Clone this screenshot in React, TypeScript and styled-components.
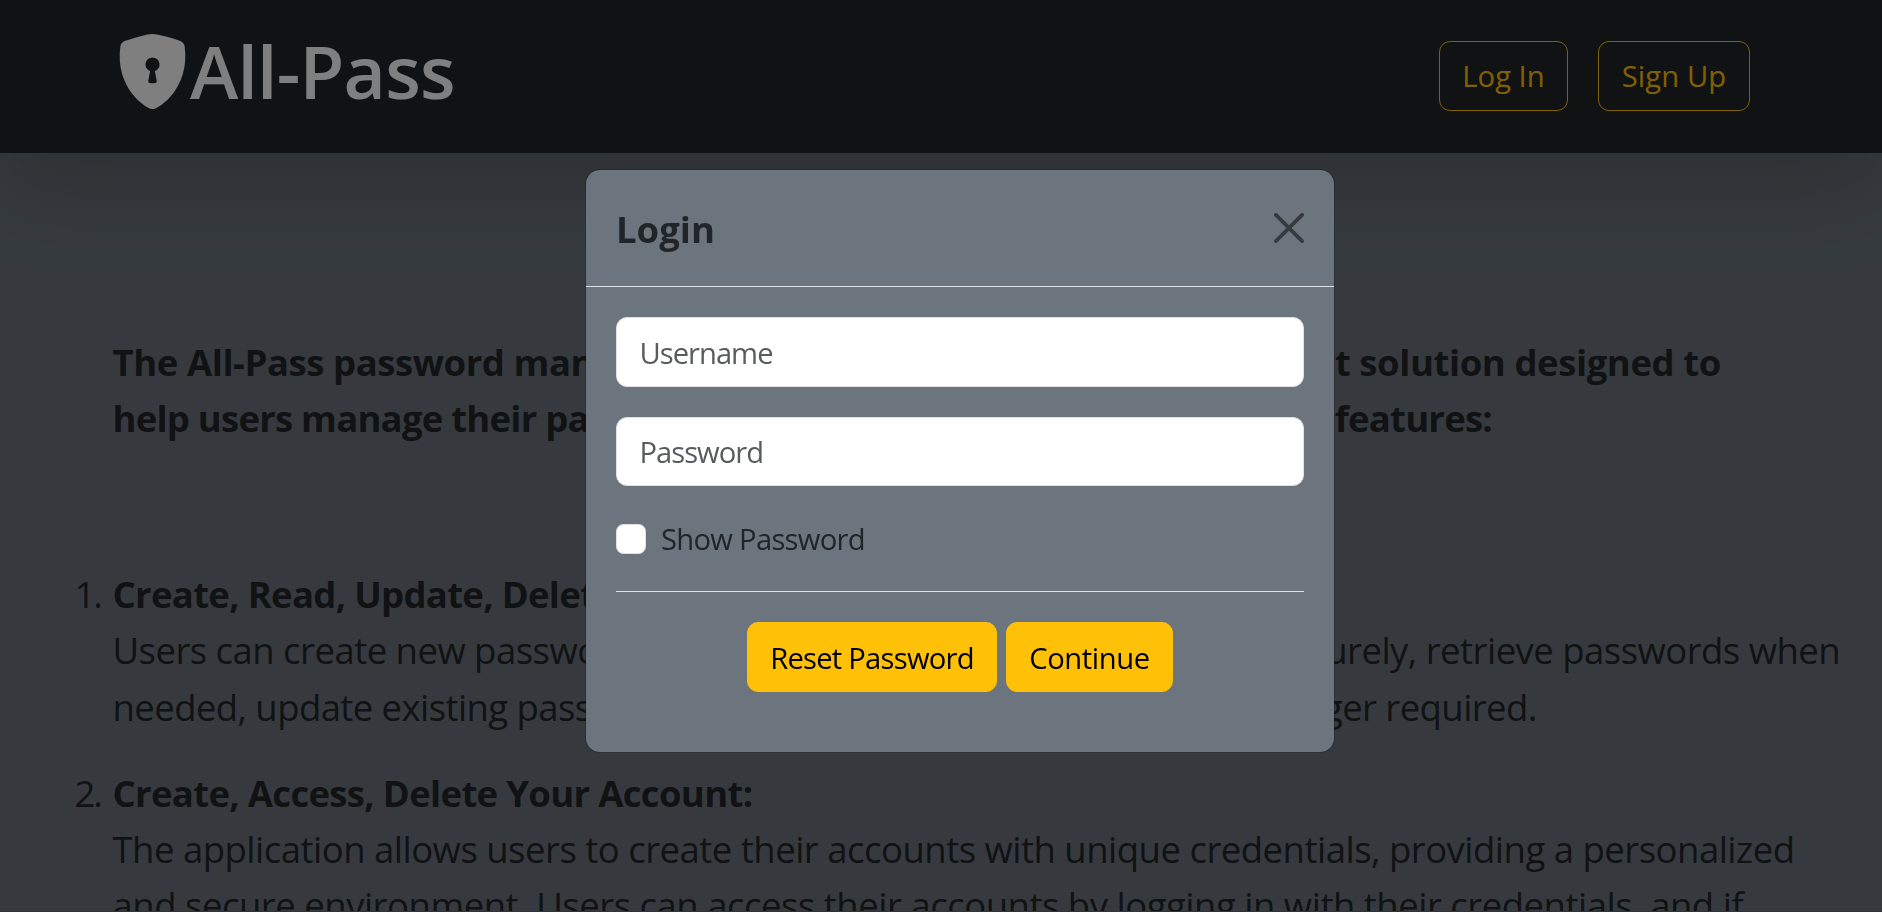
import React, { useState } from "react";
import styled, { createGlobalStyle } from "styled-components";
import { BsShieldLockFill } from "react-icons/bs";

const GlobalStyle = createGlobalStyle`
  *, *::before, *::after { box-sizing: border-box; }
  body {
    margin: 0;
    overflow: hidden;
    background: #6c757d;
    color: #212529;
    font-family: "Open Sans", "Noto Sans", sans-serif;
    font-size: 36.5px;
    line-height: 56.25px;
  }
`;

const Page = styled.div`
  height: 912px;
  overflow: hidden;
  background: #6c757d;
  border-bottom: 1px solid #785d6b;
`;

const Navbar = styled.nav`
  display: flex;
  align-items: center;
  justify-content: space-between;
  height: 153px;
  padding: 0 132px 0 115px;
  background: #212529;
  box-shadow: 0 30px 90px rgba(0, 0, 0, 0.175);
`;

const Brand = styled.a`
  display: flex;
  align-items: center;
  color: #fff;
  font-size: 73px;
  font-weight: 600;
  letter-spacing: -0.75px;
  line-height: 112px;
  margin-top: -11px;

  svg {
    flex: none;
  }
`;

const NavActions = styled.div`
  display: flex;
  gap: 30px;
  margin-bottom: 2px;
`;

const Button = styled.button<{ $width: number; $spacing?: number; $outline?: boolean }>`
  width: ${(p) => p.$width}px;
  height: 70px;
  padding: 2px 0 0;
  border: 1px solid #ffc107;
  border-radius: 11px;
  background: ${(p) => (p.$outline ? "transparent" : "#ffc107")};
  color: ${(p) => (p.$outline ? "#ffc107" : "#000")};
  font-family: inherit;
  font-size: 29.2px;
  line-height: 45px;
  letter-spacing: ${(p) => p.$spacing ?? 0}px;
  white-space: nowrap;
`;

const Content = styled.main`
  padding: 180.5px 0 0 112.5px;
`;

const Intro = styled.h5`
  margin: 0 0 120px;
  font-size: inherit;
  font-weight: 700;
`;

const Line = styled.span<{ $spacing: number }>`
  display: block;
  white-space: nowrap;
  letter-spacing: ${(p) => p.$spacing}px;
`;

const Features = styled.ol`
  margin: 0;
  padding: 0;
`;

const Feature = styled.li`
  display: flex;
  margin: 0 0 30px -38px;
`;

const Marker = styled.span`
  flex: none;
  width: 38px;
  letter-spacing: -2px;
`;

const FeatureTitle = styled(Line)`
  font-weight: 700;
`;

const Backdrop = styled.div`
  position: fixed;
  inset: 0;
  padding: 169px 0 0 585px;
  background: rgba(0, 0, 0, 0.5);
`;

const Modal = styled.div`
  width: 750px;
  height: 584px;
  border: 1px solid rgba(0, 0, 0, 0.175);
  border-radius: 15px;
  background: #6c757d;
  background-clip: padding-box;
`;

const ModalHeader = styled.header`
  display: flex;
  align-items: center;
  justify-content: space-between;
  height: 117px;
  padding: 0 30px;
  border-bottom: 1px solid #dee2e6;
`;

const ModalTitle = styled.h1`
  margin: 3px 0 0;
  font-size: 36.5px;
  font-weight: 700;
  letter-spacing: 0;
`;

const CloseButton = styled.button`
  display: flex;
  margin-bottom: 1px;
  padding: 0;
  border: 0;
  background: none;
  opacity: 0.5;
`;

const ModalBody = styled.form`
  display: flex;
  flex-direction: column;
  padding: 30px;
`;

const Field = styled.input<{ $spacing: number; $height: number }>`
  height: ${(p) => p.$height}px;
  margin-bottom: 30px;
  padding: 1px 22.5px 0;
  border: 1px solid #dee2e6;
  border-radius: 11px;
  background: #fff;
  color: #212529;
  font-family: inherit;
  font-size: 29.2px;
  letter-spacing: ${(p) => p.$spacing}px;

  &::placeholder {
    color: #595c5f;
    opacity: 1;
  }
`;

const CheckRow = styled.label`
  display: flex;
  align-items: center;
  gap: 15px;
  height: 45px;
  margin-bottom: 30px;
  font-size: 29.2px;
  letter-spacing: -0.72px;
  line-height: 45px;

  span {
    padding-top: 2px;
  }
`;

const Checkbox = styled.input`
  appearance: none;
  width: 30px;
  height: 30px;
  margin: 0;
  border: 1px solid #dee2e6;
  border-radius: 7.5px;
  background: #fff;
`;

const Actions = styled.div`
  display: flex;
  justify-content: center;
  gap: 9px;
  padding-top: 30px;
  border-top: 1px solid #dee2e6;
`;

export default function App() {
  const [visible, setVisible] = useState(false);

  return (
    <>
      <GlobalStyle />
      <Page>
        <Navbar>
          <Brand>
            <BsShieldLockFill size={75} />
            All-Pass
          </Brand>
          <NavActions>
            <Button $outline $width={129}>Log In</Button>
            <Button $outline $width={152} $spacing={0.1}>Sign Up</Button>
          </NavActions>
        </Navbar>
        <Content>
          <Intro>
            <Line $spacing={-0.43}>
              The All-Pass password manager is a robust, user-friendly and efficient solution designed to
            </Line>
            <Line $spacing={-0.78}>
              help users manage their passwords securely. Here are some of its key features:
            </Line>
          </Intro>
          <Features>
            <Feature>
              <Marker>1.</Marker>
              <div>
                <FeatureTitle $spacing={-0.7}>Create, Read, Update, Delete Passwords:</FeatureTitle>
                <Line $spacing={-0.53}>
                  Users can create new passwords for their online accounts, store them securely, retrieve passwords when
                </Line>
                <Line $spacing={-0.58}>
                  needed, update existing passwords, and delete passwords that are no longer required.
                </Line>
              </div>
            </Feature>
            <Feature>
              <Marker>2.</Marker>
              <div>
                <FeatureTitle $spacing={-0.68}>Create, Access, Delete Your Account:</FeatureTitle>
                <Line $spacing={-0.51}>
                  The application allows users to create their accounts with unique credentials, providing a personalized
                </Line>
                <Line $spacing={-0.49}>
                  and secure environment. Users can access their accounts by logging in with their credentials, and if
                </Line>
              </div>
            </Feature>
          </Features>
        </Content>
      </Page>
      <Backdrop>
        <Modal role="dialog">
          <ModalHeader>
            <ModalTitle>Login</ModalTitle>
            <CloseButton aria-label="Close">
              <svg width="30" height="30" viewBox="0 0 16 16" fill="#000">
                <path d="M.293.293a1 1 0 0 1 1.414 0L8 6.586 14.293.293a1 1 0 1 1 1.414 1.414L9.414 8l6.293 6.293a1 1 0 0 1-1.414 1.414L8 9.414l-6.293 6.293a1 1 0 0 1-1.414-1.414L6.586 8 .293 1.707a1 1 0 0 1 0-1.414z" />
              </svg>
            </CloseButton>
          </ModalHeader>
          <ModalBody onSubmit={(e) => e.preventDefault()}>
            <Field $height={70} $spacing={-1} placeholder="Username" />
            <Field $height={69} $spacing={-1} type={visible ? "text" : "password"} placeholder="Password" />
            <CheckRow>
              <Checkbox type="checkbox" checked={visible} onChange={() => setVisible(!visible)} />
              <span>Show Password</span>
            </CheckRow>
            <Actions>
              <Button type="button" $width={250} $spacing={-0.75}>Reset Password</Button>
              <Button type="submit" $width={167} $spacing={-0.4}>Continue</Button>
            </Actions>
          </ModalBody>
        </Modal>
      </Backdrop>
    </>
  );
}
